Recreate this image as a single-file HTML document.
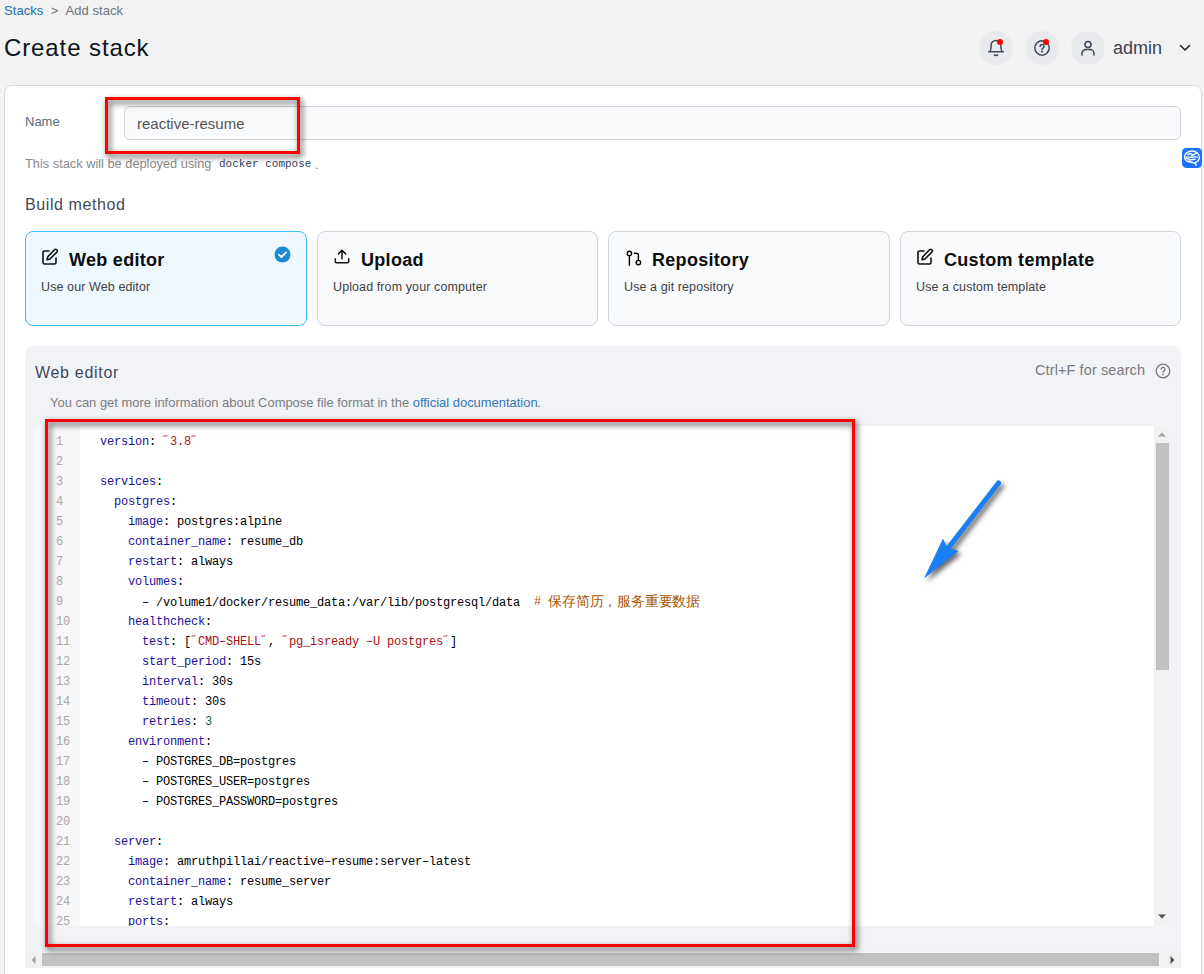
<!DOCTYPE html>
<html><head><meta charset="utf-8">
<style>
*{box-sizing:border-box;margin:0;padding:0}
html,body{width:1204px;height:974px;overflow:hidden;background:#f2f2f2;font-family:"Liberation Sans",sans-serif;position:relative}
.a{position:absolute;white-space:nowrap}
.card{position:absolute;left:4px;top:85px;width:1198px;height:1000px;background:#fff;border:1px solid #d3d9e3;border-radius:8px}
.circ{position:absolute;top:31px;width:34px;height:34px;border-radius:50%;background:#e9eaee}
.dot{position:absolute;width:6.2px;height:6.2px;border-radius:50%;background:#f00}
.bm{position:absolute;top:231px;height:95px;border:1px solid #d0d5dd;border-radius:8px;background:#f9fafb}
.bm.sel{background:#eff7ff;border-color:#3dbcf5}
.bm .t{position:absolute;left:43px;top:17.5px;font-size:18px;letter-spacing:0.3px;font-weight:bold;color:#0d0d0d}
.bm .s{position:absolute;left:15px;top:47.6px;font-size:12.5px;letter-spacing:0.1px;color:#3f3f3f}
.bm svg{position:absolute;left:15px;top:17px}
.panel{position:absolute;left:25px;top:346px;width:1156px;height:620px;background:#f2f3f7;border-radius:8px}
.ed{position:absolute;left:35px;top:426px;width:1135px;height:500px;background:#fff;border-radius:8px;overflow:hidden}
.gut{position:absolute;left:0;top:0;width:45px;height:500px;background:#f7f7f7}
.code{position:absolute;left:0;top:5.5px;font-family:"Liberation Mono",monospace;font-size:12px;line-height:20px;color:#000}
.ln{position:absolute;left:21px;color:#a8a8a8;font-family:"Liberation Mono",monospace;font-size:12px;line-height:20px}
.code pre{font-family:inherit;position:absolute;left:65px;letter-spacing:-0.2px}
.code pre.ln{left:21px}
.k{color:#219}.s1{color:#a11}.n{color:#164}.c{color:#a50}
.redbox{position:absolute;border:3px solid #f00;filter:drop-shadow(2px 3px 3px rgba(0,0,0,.75))}
</style></head><body>
<!-- breadcrumb -->
<div class="a" style="left:4px;top:3px;font-size:13px;letter-spacing:0.05px;color:#6b7280"><span style="color:#226cae">Stacks</span>&nbsp; &gt; &nbsp;Add stack</div>
<div class="a" style="left:4px;top:34px;font-size:24px;letter-spacing:0.9px;color:#0b1220">Create stack</div>

<!-- header right -->
<div class="circ" style="left:979px"></div>
<div class="circ" style="left:1025px"></div>
<div class="circ" style="left:1071px"></div>
<svg class="a" style="left:976px;top:28px" width="40" height="40" viewBox="976 28 40 40" fill="none" stroke="#3c4656" stroke-width="1.5" stroke-linecap="round" stroke-linejoin="round"><path d="M988.8 51.8H1003.2M989.6 51.8C990.9 50.6 991.1 49 991.1 47V45.3A4.9 4.9 0 0 1 1000.9 45.3V47C1000.9 49 1001.1 50.6 1002.4 51.8"/><path d="M994.4 54.9Q996 56.1 997.6 54.9"/></svg>
<div class="dot" style="left:996.9px;top:38.9px"></div>
<svg class="a" style="left:1033px;top:39px" width="18" height="18" viewBox="0 0 18 18" fill="none" stroke="#3c4656" stroke-width="1.5" stroke-linecap="round"><circle cx="9" cy="9" r="7.2"/><path d="M7.1 7.5a1.95 1.95 0 1 1 2.7 1.8c-.5.25-.8.6-.8 1.1"/><circle cx="9" cy="12.6" r=".35" fill="#3c4656"/></svg>
<div class="dot" style="left:1042.9px;top:38.9px"></div>
<svg class="a" style="left:1080px;top:40px" width="16" height="16" viewBox="0 0 16 16" fill="none" stroke="#3c4656" stroke-width="1.5" stroke-linecap="round"><circle cx="8" cy="4.5" r="3"/><path d="M2 15v-1.5a4 4 0 0 1 4-4h4a4 4 0 0 1 4 4V15"/></svg>
<div class="a" style="left:1113px;top:38px;font-size:18px;color:#3a4250">admin</div>
<svg class="a" style="left:1179px;top:43px" width="12" height="10" viewBox="0 0 12 10" fill="none" stroke="#222" stroke-width="1.6" stroke-linecap="round" stroke-linejoin="round"><path d="M1.5 2.5l4.5 4.5 4.5-4.5"/></svg>

<!-- main card -->
<div class="card"></div>
<div class="a" style="left:25px;top:114px;font-size:13px;color:#5a6880">Name</div>
<div class="a" style="left:124px;top:106px;width:1057px;height:34px;border:1px solid #cfd3d9;border-radius:6px;background:#f9fafb"></div>
<div class="a" style="left:137px;top:115px;font-size:15px;color:#555">reactive-resume</div>
<div class="a" style="left:25px;top:156.3px;font-size:12.8px;color:#8a8a8a">This stack will be deployed using</div><div class="a" style="left:219px;top:158px;font-family:'Liberation Mono',monospace;color:#36415a;font-size:11px">docker compose</div><div class="a" style="left:315px;top:157px;font-size:12.8px;color:#8a8a8a">.</div>

<div class="a" style="left:25px;top:196px;font-size:16px;letter-spacing:0.6px;color:#404a5a">Build method</div>

<div class="bm sel" style="left:25px;width:282px">
 <svg style="top:16px" width="18" height="18" viewBox="0 0 18 18" fill="none" stroke="#111" stroke-width="1.6" stroke-linecap="round" stroke-linejoin="round"><path d="M8 3H3.5A1.5 1.5 0 0 0 2 4.5v10A1.5 1.5 0 0 0 3.5 16h10a1.5 1.5 0 0 0 1.5-1.5V10"/><path d="M13.5 1.8a1.6 1.6 0 0 1 2.3 2.3L9 11l-3 .8.8-3z"/></svg>
 <div class="t">Web editor</div><div class="s">Use our Web editor</div>
 <svg style="left:248px;top:14px" width="17" height="17" viewBox="0 0 17 17"><circle cx="8.5" cy="8.5" r="8" fill="#1b8bd1"/><path d="M5 8.7l2.4 2.3 4.6-4.6" fill="none" stroke="#fff" stroke-width="1.8" stroke-linecap="round" stroke-linejoin="round"/></svg>
</div>
<div class="bm" style="left:317px;width:281px">
 <svg style="top:16px" width="18" height="18" viewBox="0 0 18 18" fill="none" stroke="#111" stroke-width="1.5" stroke-linecap="round" stroke-linejoin="round"><path d="M2.3 10.8v2.4a1.6 1.6 0 0 0 1.6 1.6h10.2a1.6 1.6 0 0 0 1.6-1.6V10.8"/><path d="M5.4 5.9L9 2.3l3.6 3.6"/><path d="M9 2.5v8.2"/></svg>
 <div class="t">Upload</div><div class="s">Upload from your computer</div>
</div>
<div class="bm" style="left:608px;width:282px">
 <svg width="18" height="18" viewBox="0 0 18 18" fill="none" stroke="#000" stroke-width="1.4" stroke-linecap="round" stroke-linejoin="round"><circle cx="5.4" cy="4.5" r="2.2"/><path d="M5.4 6.7V16.2"/><circle cx="14.4" cy="13.6" r="2.2"/><path d="M14.4 11.4V6.3a2 2 0 0 0-2-2H10.4"/></svg>
 <div class="t">Repository</div><div class="s">Use a git repository</div>
</div>
<div class="bm" style="left:900px;width:281px">
 <svg style="top:16px" width="18" height="18" viewBox="0 0 18 18" fill="none" stroke="#111" stroke-width="1.6" stroke-linecap="round" stroke-linejoin="round"><path d="M8 3H3.5A1.5 1.5 0 0 0 2 4.5v10A1.5 1.5 0 0 0 3.5 16h10a1.5 1.5 0 0 0 1.5-1.5V10"/><path d="M13.5 1.8a1.6 1.6 0 0 1 2.3 2.3L9 11l-3 .8.8-3z"/></svg>
 <div class="t">Custom template</div><div class="s">Use a custom template</div>
</div>

<!-- web editor panel -->
<div class="panel"></div>
<div class="a" style="left:35px;top:364px;font-size:16px;letter-spacing:0.7px;color:#404a5a">Web editor</div>
<div class="a" style="left:1035px;top:362px;font-size:14.5px;letter-spacing:0.1px;color:#7a7a7a">Ctrl+F for search</div>
<svg class="a" style="left:1155px;top:363px" width="16" height="16" viewBox="0 0 16 16" fill="none" stroke="#7a7a7a" stroke-width="1.3" stroke-linecap="round"><circle cx="8" cy="8" r="6.8"/><path d="M6.2 6.3a1.9 1.9 0 1 1 2.6 1.8c-.5.2-.8.6-.8 1.1"/><circle cx="8" cy="11.4" r=".3" fill="#7a7a7a"/></svg>
<div class="a" style="left:50px;top:395px;font-size:12.95px;color:#7c7c7c">You can get more information about Compose file format in the <span style="color:#3277b5">official documentation</span>.</div>

<div class="ed">
 <div class="gut"></div>
 <div class="code">
<pre class="ln" style="letter-spacing:-0.2px">1
2
3
4
5
6
7
8
9
10
11
12
13
14
15
16
17
18
19
20
21
22
23
24
25</pre>
<pre><span class="k">version</span>: <span class="s1">˝3.8˝</span>

<span class="k">services</span>:
  <span class="k">postgres</span>:
    <span class="k">image</span>: postgres:alpine
    <span class="k">container_name</span>: resume_db
    <span class="k">restart</span>: always
    <span class="k">volumes</span>:
      – /volume1/docker/resume_data<span>:</span>/var/lib/postgresql/data  <span class="c"># <span style="font-size:14px;vertical-align:-0.5px">保存简历，服务重要数据</span></span>
    <span class="k">healthcheck</span>:
      <span class="k">test</span>: [<span class="s1">˝CMD–SHELL˝</span>, <span class="s1">˝pg_isready –U postgres˝</span>]
      <span class="k">start_period</span>: 15s
      <span class="k">interval</span>: 30s
      <span class="k">timeout</span>: 30s
      <span class="k">retries</span>: <span class="n">3</span>
    <span class="k">environment</span>:
      – POSTGRES_DB=postgres
      – POSTGRES_USER=postgres
      – POSTGRES_PASSWORD=postgres

  <span class="k">server</span>:
    <span class="k">image</span>: amruthpillai/reactive–resume:server–latest
    <span class="k">container_name</span>: resume_server
    <span class="k">restart</span>: always
    <span class="k">ports</span>:</pre>
 </div>
 <!-- vertical scrollbar -->
 <div class="a" style="left:1119px;top:0;width:16px;height:500px;background:#f1f1f1"></div>
 <div class="a" style="left:1121px;top:17px;width:13px;height:227px;background:#c1c1c1"></div>
 <svg class="a" style="left:1122px;top:5px" width="10" height="6"><path d="M1 5.5L5 1.5 9 5.5z" fill="#a3a3a3"/></svg>
 <svg class="a" style="left:1122px;top:488px" width="10" height="6"><path d="M1 .5L5 4.5 9 .5z" fill="#505050"/></svg>
</div>

<!-- horizontal scrollbar -->
<div class="a" style="left:25px;top:951px;width:1156px;height:17px;background:#f1f1f1"></div>
<div class="a" style="left:42px;top:953px;width:1117px;height:13px;background:#c1c1c1"></div>
<svg class="a" style="left:30px;top:955px" width="6" height="10"><path d="M5.5 1L1.5 5 5.5 9z" fill="#a3a3a3"/></svg>
<svg class="a" style="left:1170px;top:955px" width="6" height="10"><path d="M.5 1L4.5 5 .5 9z" fill="#505050"/></svg>

<!-- side brain icon -->
<div class="a" style="left:1182px;top:148px;width:20px;height:20px;border-radius:4.5px;background:#1a73fa"></div>
<svg class="a" style="left:1182px;top:148px" width="20" height="20" viewBox="0 0 20 20" fill="none" stroke="#fff" stroke-width="1.15" stroke-linecap="round" stroke-linejoin="round"><g transform="translate(10 10) scale(1.17) translate(-10 -11)"><path d="M13.5 17.3c-.3-1.2-.6-2-.6-2.6 1.8-.5 3.4-2 3.4-4.4 0-3.2-2.8-5.3-6.3-5.3S3.5 7.2 3.5 10c0 2.6 2.4 4.2 5 4.4 1.6.1 3 .6 4.4 1.5"/><path d="M6 8.2c1.3-.9 2.8-1 4.2-.6M9.8 9.2c1.5-.9 3-1.9 4.3-2.3M4.5 10.2h3.2c.8 0 1.4.4 2.2.3 1.5-.2 2.7-.9 4.6-.3M4.8 11.8h2.6M7.5 12.8c1.5-.3 3.3-.5 5.3-.8"/></g></svg>

<!-- annotations -->
<div class="redbox" style="left:105px;top:97px;width:195px;height:57px"></div>
<div class="redbox" style="left:45px;top:419px;width:810px;height:528px"></div>
<svg class="a" style="left:900px;top:470px;filter:drop-shadow(3px 3px 2.5px rgba(0,0,0,.6))" width="120" height="130" viewBox="900 470 120 130"><path d="M998.5 483L949 547" stroke="#1a7ff5" stroke-width="5" stroke-linecap="round"/><path d="M924 578.5L943 538.5L946 545L952 549L958.5 551z" fill="#1a7ff5"/></svg>
</body></html>
